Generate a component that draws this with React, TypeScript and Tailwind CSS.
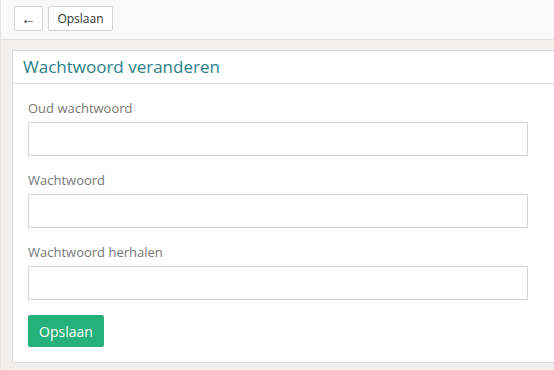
export default function App() {
  const fields = ['Oud wachtwoord', 'Wachtwoord', 'Wachtwoord herhalen'];
  return (
    <div className="h-[370px] w-[554px] overflow-hidden bg-[#f1f0ee] border-l border-[#e4e4e4] font-['Open_Sans',sans-serif]">
      <div className="flex h-[40px] items-start gap-[5px] border-b border-[#e2e2e2] bg-[#f9f9f9] pl-[13px] pt-[6px]">
        <button className="flex h-[25px] w-[29px] items-center justify-center rounded-[2px] border border-[#d4d4d4] bg-white text-[15px] text-[#333]">
          ←
        </button>
        <button className="h-[25px] w-[65px] rounded-[2px] border border-[#d4d4d4] bg-white text-[12px] text-[#333]">
          Opslaan
        </button>
      </div>
      <div className="ml-[11px] mt-[10px] w-[560px] border border-r-0 border-[#dcdcdc] bg-white">
        <div className="flex h-[33px] items-center border-b border-[#dcdcdc] pl-[10px] text-[17px] text-[#2a7f8b]">
          Wachtwoord veranderen
        </div>
        <div className="px-[15px] pb-[15px] pt-[15px]">
          {fields.map((f) => (
            <div key={f} className="mb-[15px]">
              <div className="mb-[4px] h-[19px] text-[13px] leading-[19px] text-[#777]">{f}</div>
              <input type="password" className="block h-[34px] w-[500px] border border-[#d6d6d6] bg-white outline-none" />
            </div>
          ))}
          <button className="h-[32px] w-[76px] rounded-[2px] bg-[#26b07a] text-[14px] text-white">Opslaan</button>
        </div>
      </div>
    </div>
  );
}
